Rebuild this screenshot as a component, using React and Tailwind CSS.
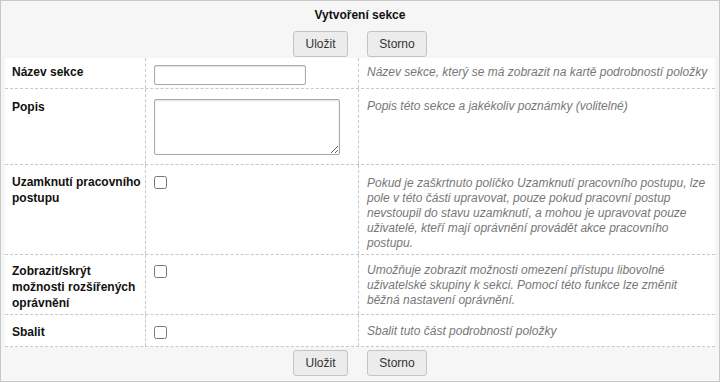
import React from "react";

const rows = [
  {
    label: "Název sekce",
    kind: "input",
    help: "Název sekce, který se má zobrazit na kartě podrobností položky",
    h: "h-[31px]",
    pt: "pt-[6px]",
  },
  {
    label: "Popis",
    kind: "textarea",
    help: "Popis této sekce a jakékoliv poznámky (volitelné)",
    h: "h-[76px]",
    pt: "pt-[10px]",
  },
  {
    label: "Uzamknutí pracovního postupu",
    kind: "checkbox",
    help: (
      <>
        Pokud je zaškrtnuto políčko Uzamknutí pracovního postupu, lze pole v této části
        upravovat, pouze pokud pracovní postup
        <br />
        nevstoupil do stavu uzamknutí, a mohou je upravovat pouze uživatelé, kteří mají
        oprávnění provádět akce pracovního postupu.
      </>
    ),
    h: "h-[90px]",
    pt: "pt-[9px]",
  },
  {
    label: "Zobrazit/skrýt možnosti rozšířených oprávnění",
    kind: "checkbox",
    help: "Umožňuje zobrazit možnosti omezení přístupu libovolné uživatelské skupiny k sekci. Pomocí této funkce lze změnit běžná nastavení oprávnění.",
    h: "h-[60px]",
    pt: "pt-[8px]",
  },
  {
    label: "Sbalit",
    kind: "checkbox",
    help: "Sbalit tuto část podrobností položky",
    h: "h-[32px]",
    pt: "pt-[9px]",
  },
];

function Buttons() {
  return (
    <div className="flex justify-center gap-[19px]">
      <button className="w-[55px] h-[26px] border border-[#c4c4c4] rounded-[3px] bg-[#ececec] text-[12px] text-[#333]">
        Uložit
      </button>
      <button className="w-[60px] h-[26px] border border-[#c4c4c4] rounded-[3px] bg-[#ececec] text-[12px] text-[#333]">
        Storno
      </button>
    </div>
  );
}

function Field({ kind }) {
  if (kind === "input")
    return (
      <input
        type="text"
        className="block w-[152px] h-[20px] border border-[#a9a9a9] rounded-[2px] bg-white shadow-[inset_0_1px_2px_rgba(0,0,0,0.12)] mt-[1px]"
      />
    );
  if (kind === "textarea")
    return (
      <textarea className="block w-[186px] h-[56px] border border-[#a9a9a9] rounded-[2px] bg-white shadow-[inset_0_1px_2px_rgba(0,0,0,0.12)]" />
    );
  return <input type="checkbox" className="block m-0 mt-[2px] w-[13px] h-[13px]" />;
}

export default function App() {
  return (
    <div
      className="w-[720px] h-[382px] border border-[#c8c8c8] bg-[#f6f6f6] px-[4px]"
      style={{ fontFamily: '"Liberation Sans", Arial, sans-serif' }}
    >
      <div className="text-center font-bold text-[12px] leading-[16px] pt-[6px] mb-[8px] text-[#111]">
        Vytvoření sekce
      </div>
      <Buttons />
      <div className="bg-white mt-[1px]">
        {rows.map((r, i) => (
          <div
            key={i}
            className={`grid grid-cols-[141px_213px_1fr] border-b border-dashed border-[#c8c8c8] ${r.h}`}
          >
            <div
              className={`border-r border-dashed border-[#c8c8c8] pl-[7px] pr-[4px] font-bold text-[12px] leading-[16px] text-[#111] ${r.pt}`}
            >
              {r.label}
            </div>
            <div className={`border-r border-dashed border-[#c8c8c8] pl-[8px] ${i === 1 ? "pt-[10px]" : r.pt}`}>
              <Field kind={r.kind} />
            </div>
            <div
              className={`pl-[8px] pr-[7px] italic text-[12px] leading-[15px] text-[#777] ${
                i === 0 ? "pt-[7px]" : i === 2 ? "pt-[11px]" : r.pt
              }`}
            >
              {r.help}
            </div>
          </div>
        ))}
      </div>
      <div className="mt-[3px]">
        <Buttons />
      </div>
    </div>
  );
}
